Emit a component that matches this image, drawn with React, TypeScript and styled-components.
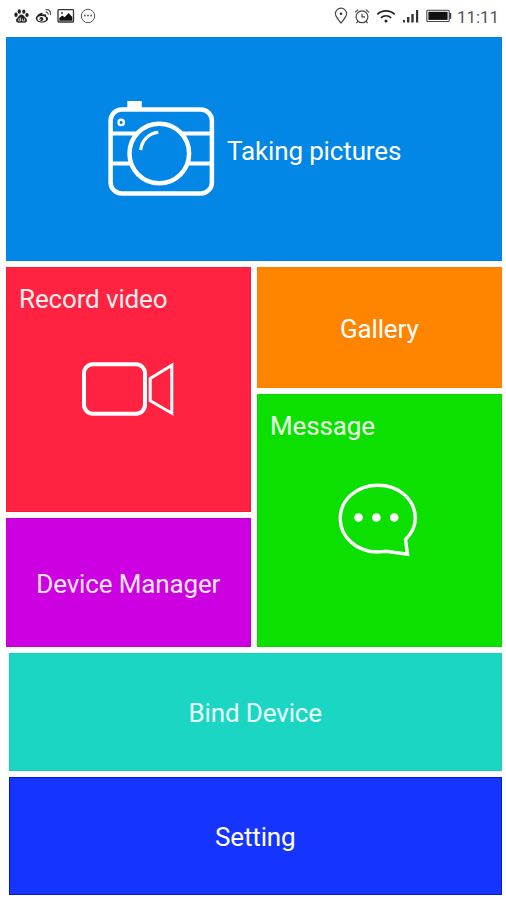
import React from "react";
import styled, { createGlobalStyle } from "styled-components";

const GlobalStyle = createGlobalStyle`
  * { box-sizing: border-box; }
  body { margin: 0; background: #fff; font-family: Roboto, "Noto Sans", sans-serif; }
`;

const Screen = styled.main`
  width: 506px;
  height: 900px;
  overflow: hidden;
  display: flex;
  flex-direction: column;
  background: #fff;
`;

const StatusBar = styled.header`
  height: 37px;
  flex: none;
  display: flex;
  justify-content: space-between;
  padding: 6px 8px 0 13px;
  color: #222;
`;

const StatusGroup = styled.div<{ $gap: number }>`
  display: flex;
  align-items: center;
  height: 20px;
  gap: ${(p) => p.$gap}px;
  svg { display: block; flex: none; }
`;

const Clock = styled.time`
  font-size: 17px;
  line-height: 20px;
  width: 41px;
  margin-left: -1px;
  padding-top: 1px;
  letter-spacing: -0.1px;
  white-space: nowrap;
  color: #555;
`;

const Tiles = styled.div`
  display: flex;
  flex-direction: column;
  gap: 6px;
  padding: 0 4.5px 0 6px;
`;

const Columns = styled.div`
  display: grid;
  grid-template-columns: 244.5px 244.5px;
  column-gap: 6.5px;
`;

const Column = styled.div`
  display: flex;
  flex-direction: column;
  gap: 6px;
`;

const LowerTiles = styled.div`
  display: flex;
  flex-direction: column;
  gap: 5.5px;
  padding-left: 3px;
`;

const Tile = styled.button<{ $color: string; $edge: string; $height: number }>`
  appearance: none;
  border: 0;
  border-radius: 0;
  margin: 0;
  padding: 2px 0 0;
  width: 100%;
  height: ${(p) => p.$height}px;
  background: ${(p) => p.$color};
  box-shadow: inset 0 0 0 1px ${(p) => p.$edge};
  color: #fff;
  font: 400 26px/30px Roboto, "Noto Sans", sans-serif;
  display: flex;
  align-items: center;
  justify-content: center;
`;

const HeroTile = styled(Tile)`
  justify-content: flex-start;
  padding: 3px 0 0 101px;
  gap: 12px;
  svg { margin-bottom: 6px; }
`;

const StackedTile = styled(Tile)<{ $iconGap: number; $iconLeft: number }>`
  flex-direction: column;
  align-items: flex-start;
  justify-content: flex-start;
  padding: 17px 0 0 13px;
  svg {
    margin: ${(p) => p.$iconGap}px 0 0 ${(p) => p.$iconLeft}px;
  }
`;

const Label = styled.span<{ $dx?: number; $tint?: string }>`
  letter-spacing: -0.14px;
  margin-left: ${(p) => p.$dx ?? 0}px;
  color: ${(p) => p.$tint ?? "#fff"};
  white-space: nowrap;
`;

const PawIcon = () => (
  <svg width="17" height="16" viewBox="0 0 17 16" fill="#222">
    <ellipse cx="3" cy="6.7" rx="1.7" ry="2.3" />
    <ellipse cx="6.3" cy="3.5" rx="1.6" ry="2.2" />
    <ellipse cx="10.8" cy="3.6" rx="1.6" ry="2.2" />
    <ellipse cx="14" cy="7" rx="1.7" ry="2.1" />
    <path d="M8.5 6.6c2 0 2.6 2 4.2 3.4 2.3 2 1.2 4.7-1.4 4.7-1 0-1.8-.3-2.8-.3s-1.800.3-2.800.3c-2.600 0-3.700-2.700-1.400-4.700C5.900 8.600 6.500 6.600 8.500 6.600Z" />
    <path d="M7.600 9.400v3.600H6.200a1 1 0 0 1 0-2.100h1.400M9.500 10.500v2.500h2v-2.500" fill="none" stroke="#fff" strokeWidth=".7" />
  </svg>
);

const WeiboIcon = () => (
  <svg width="17" height="16" viewBox="0 0 17 16" fill="none" stroke="#222">
    <path
      d="M6.300 4.700C3.500 5.500.9 8.300.9 10.600c0 2.500 2.900 4 6 4 3.700 0 6.200-2 6.200-4.100 0-1.300-1-1.800-2-2.100.6-2-.9-2.700-3.500-1.700.4-1.300-.1-2.200-1.300-2Z"
      fill="#222"
      stroke="none"
    />
    <ellipse cx="6.700" cy="10.700" rx="4.300" ry="2.700" fill="#fff" stroke="none" />
    <circle cx="6.400" cy="10.900" r="2" fill="#222" stroke="none" />
    <circle cx="5.800" cy="11.300" r=".6" fill="#fff" stroke="none" />
    <path d="M10.500 1.700c3.500-.8 6 2 4.900 5.300M10.600 4.100c1.700-.3 2.900.9 2.400 2.500" stroke="#555" strokeWidth="1.300" />
  </svg>
);

const PictureIcon = () => (
  <svg width="18" height="16" viewBox="0 0 18 16">
    <rect x="1" y="1.700" width="15.500" height="12.300" rx=".8" fill="#fff" stroke="#333" strokeWidth="1.300" />
    <path d="M2.300 12.700V10l3-2.500 2.300 1.700 4-4.200L15.300 9v3.700Z" fill="#111" />
    <circle cx="5" cy="5" r="1" fill="#333" />
  </svg>
);

const ChatDotsIcon = () => (
  <svg width="16" height="16" viewBox="0 0 16 16">
    <circle cx="8" cy="8" r="6.700" fill="none" stroke="#555" />
    <g fill="#555">
      <circle cx="4.900" cy="7.500" r=".9" />
      <circle cx="8" cy="7.500" r=".9" />
      <circle cx="11.100" cy="7.500" r=".9" />
    </g>
  </svg>
);

const PinIcon = () => (
  <svg width="14" height="18" viewBox="0 0 14 18" fill="none" stroke="#444" strokeWidth="1.200">
    <path d="M7 16C4.500 12.600 1.400 9.800 1.400 6.800a5.600 5.600 0 0 1 11.200 0C12.600 9.800 9.500 12.600 7 16Z" />
    <circle cx="7" cy="6.800" r="1.300" fill="#333" stroke="none" />
  </svg>
);

const AlarmIcon = () => (
  <svg width="16" height="17" viewBox="0 0 16 17" fill="none" stroke="#444" strokeWidth="1.200">
    <circle cx="8" cy="8.800" r="5.900" />
    <path d="M8 5.800v3h3M1 4.400 4.200 1.600M15 4.400l-3.200-2.800M3.900 13.200l-1.500 1.900M12.100 13.200l1.500 1.900" />
  </svg>
);

const WifiIcon = () => (
  <svg width="20" height="15" viewBox="0 0 20 15" fill="none" stroke="#222" strokeWidth="1.700">
    <path d="M1.300 5.400c5-4.600 12.400-4.600 17.400 0M4.900 8.800c3-2.600 7.200-2.600 10.200 0" />
    <circle cx="10" cy="12" r="1.500" fill="#222" stroke="none" />
  </svg>
);

const SignalIcon = () => (
  <svg width="18" height="15" viewBox="0 0 18 15" fill="#333">
    <rect x="1" y="11" width="2" height="2.500" />
    <rect x="5" y="8" width="2.400" height="5.500" />
    <rect x="9.300" y="5" width="2.400" height="8.500" />
    <rect x="14" y="1" width="2.200" height="12.500" />
  </svg>
);

const BatteryIcon = () => (
  <svg width="26" height="14" viewBox="0 0 26 14">
    <rect x=".8" y="1.200" width="22.400" height="11.300" rx="1" fill="#fff" stroke="#444" strokeWidth="1.100" />
    <rect x="2.400" y="2.800" width="19.200" height="8.100" fill="#111" />
    <rect x="23.500" y="4" width="1.700" height="5.700" fill="#333" />
  </svg>
);

const CameraIcon = () => (
  <svg width="108" height="96" viewBox="0 0 108 96" fill="none" stroke="#fff" strokeWidth="4.500">
    <rect x="20.300" y="1" width="14.500" height="8" fill="#fff" stroke="none" />
    <rect x="3.600" y="9.600" width="101.300" height="83.800" rx="11" />
    <path d="M4 33.500h25.500M4 63.400h20M75 33.500h30M80.600 63.400h24.400" strokeWidth="4" />
    <circle cx="52.300" cy="53.500" r="29.800" />
    <path d="M33.700 50C34.500 41 41.500 33 51.300 32.300" strokeWidth="3.300" />
    <circle cx="14.200" cy="22.400" r="2.700" strokeWidth="2.300" />
  </svg>
);

const VideoIcon = () => (
  <svg width="92" height="54" viewBox="0 0 92 54" fill="none" stroke="#fff">
    <rect x="2" y="2.200" width="61" height="49.500" rx="9" strokeWidth="4" />
    <path d="M68.200 16.600 89.800 3.200v48L68.200 38.700Z" strokeWidth="3" />
  </svg>
);

const MessageIcon = () => (
  <svg width="80" height="74" viewBox="0 0 80 74">
    <path
      d="M67.500 56.500C73.500 50.500 77.300 43.800 77.300 35.500 77.300 16.500 60.800 2.300 40 2.300S2.200 16.500 2.200 35.500 19.200 69 40 69c3 0 5.200-.8 8-.8l21.500 3L67.500 56.500Z"
      fill="none"
      stroke="#fff"
      strokeWidth="3.400"
    />
    <g fill="#fff">
      <circle cx="20.500" cy="34.500" r="4.300" />
      <circle cx="38.400" cy="34.500" r="4.300" />
      <circle cx="56.200" cy="34.500" r="4.300" />
    </g>
  </svg>
);

export default function App() {
  return (
    <Screen>
      <GlobalStyle />
      <StatusBar>
        <StatusGroup $gap={5}>
          <PawIcon />
          <WeiboIcon />
          <PictureIcon />
          <ChatDotsIcon />
        </StatusGroup>
        <StatusGroup $gap={6}>
          <PinIcon />
          <AlarmIcon />
          <WifiIcon />
          <SignalIcon />
          <BatteryIcon />
          <Clock>11:11</Clock>
        </StatusGroup>
      </StatusBar>
      <Tiles>
        <HeroTile $color="#0287e7" $edge="#0082e2" $height={224}>
          <CameraIcon />
          <Label>Taking pictures</Label>
        </HeroTile>
        <Columns>
          <Column>
            <StackedTile $color="#ff2341" $edge="#f81b3b" $height={245} $iconGap={48} $iconLeft={63}>
              <Label $tint="#ffeef0">Record video</Label>
              <VideoIcon />
            </StackedTile>
            <Tile $color="#cc00e0" $edge="#c200d6" $height={129}>
              <Label $tint="#ffe5ff">Device Manager</Label>
            </Tile>
          </Column>
          <Column>
            <Tile $color="#ff8400" $edge="#fc8000" $height={121}>
              <Label>Gallery</Label>
            </Tile>
            <StackedTile $color="#0be000" $edge="#08d900" $height={253} $iconGap={42} $iconLeft={68}>
              <Label $tint="#ecffe8">Message</Label>
              <MessageIcon />
            </StackedTile>
          </Column>
        </Columns>
        <LowerTiles>
          <Tile $color="#1cd6c4" $edge="#16cdbb" $height={118}>
            <Label $tint="#e8fffd">Bind Device</Label>
          </Tile>
          <Tile $color="#1634ff" $edge="#0617d8" $height={118.5}>
            <Label>Setting</Label>
          </Tile>
        </LowerTiles>
      </Tiles>
    </Screen>
  );
}
